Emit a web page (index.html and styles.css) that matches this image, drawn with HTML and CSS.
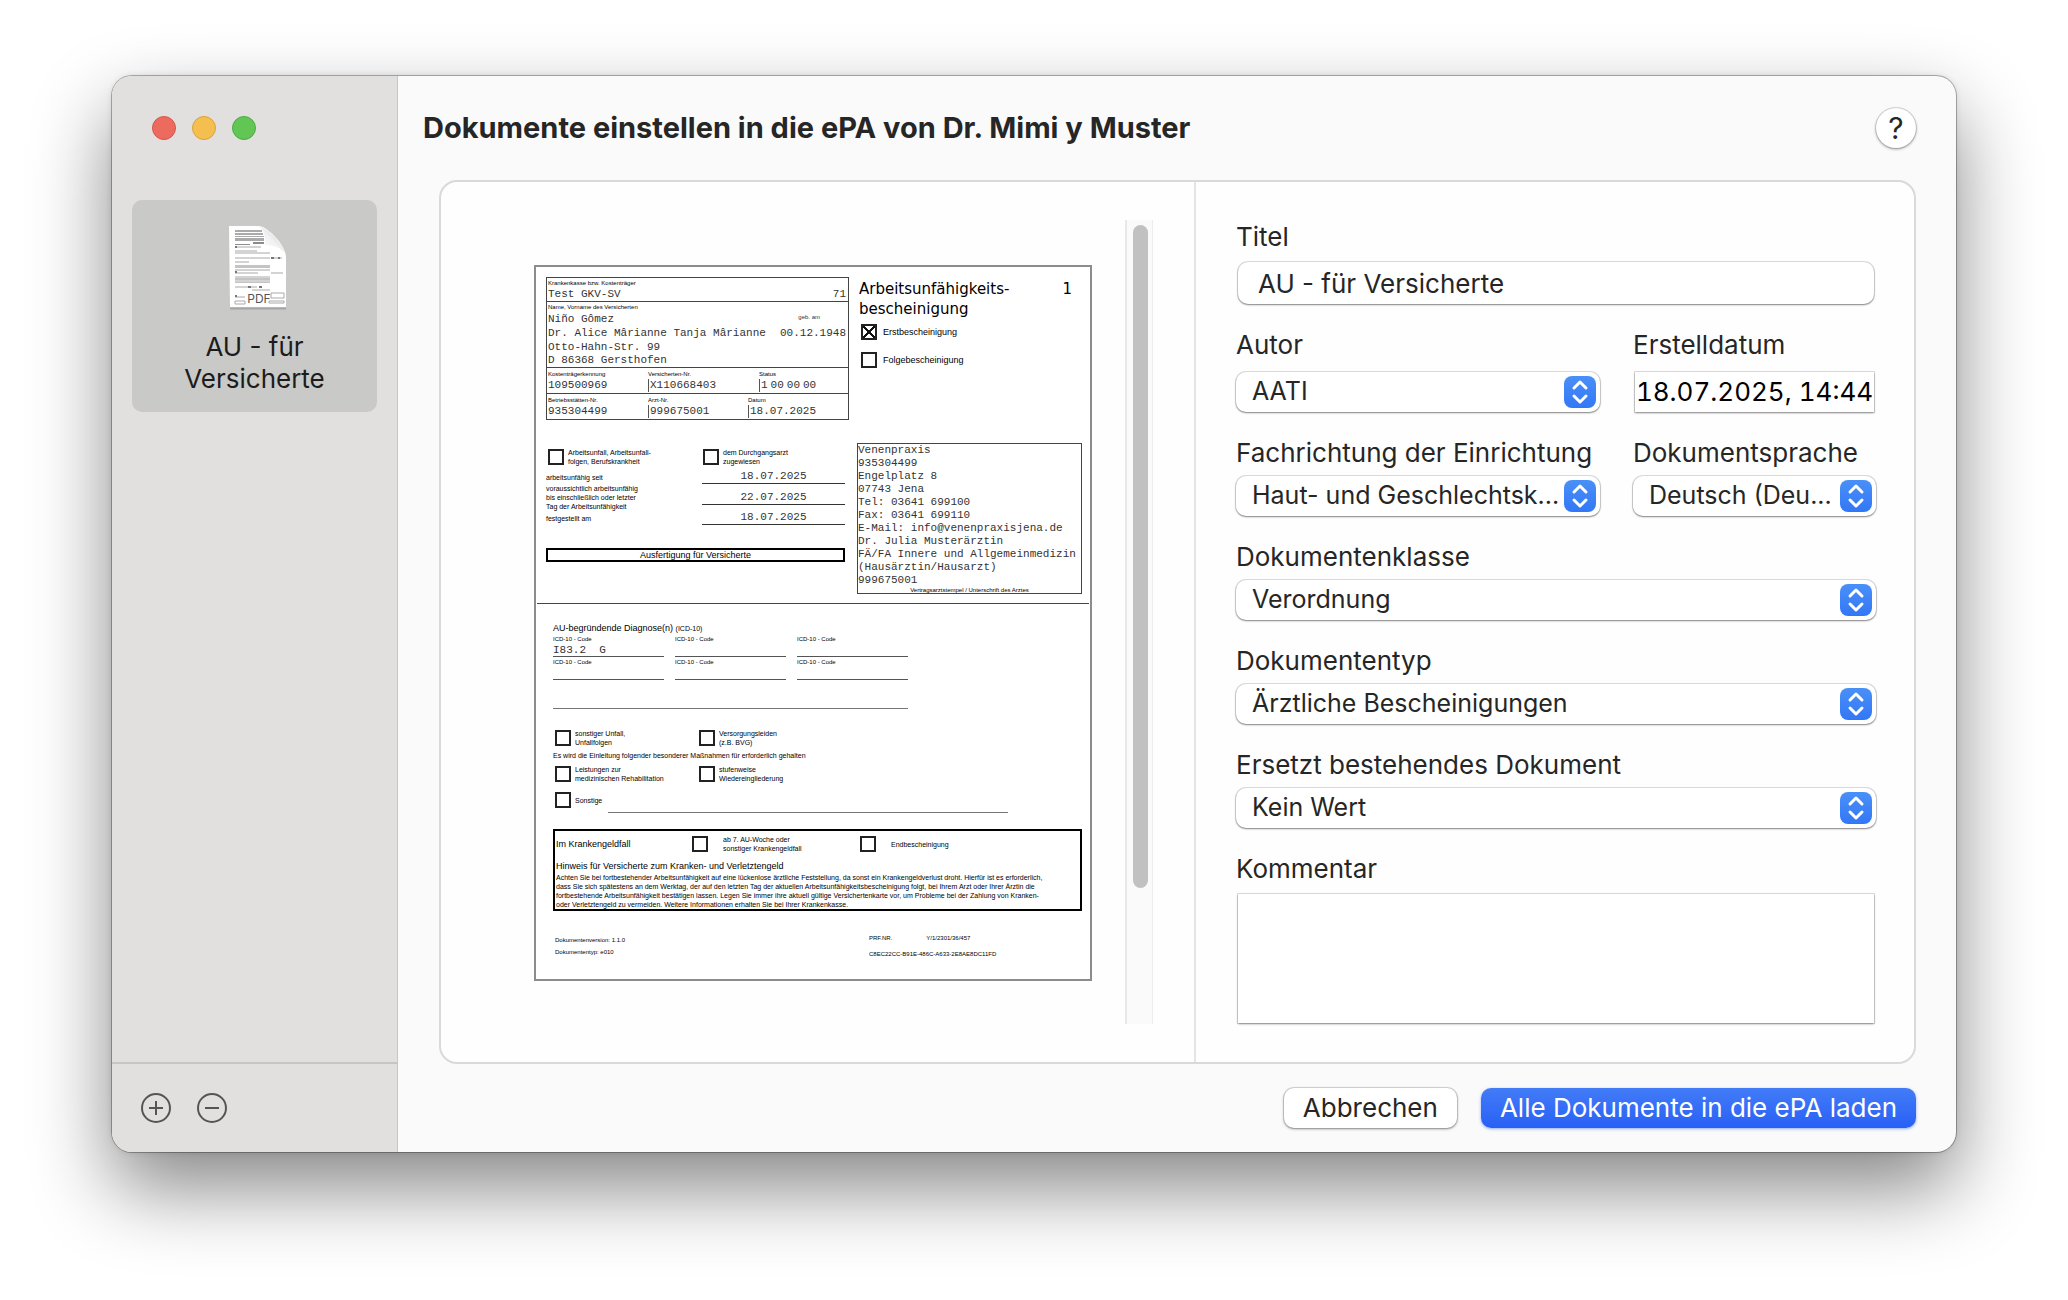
FILE: index.html
```html
<!DOCTYPE html>
<html lang="de">
  <head>
    <meta charset="UTF-8" />
    <meta name="viewport" content="width=device-width, initial-scale=1.0" />
    <title>Dokumente einstellen</title>
    <link rel="stylesheet" href="styles.css">
  </head>
  <body>
    <div class="window">
      <aside class="sidebar">
        <div class="lights">
          <button class="light red" aria-label="Schließen"></button>
          <button class="light yellow" aria-label="Minimieren"></button>
          <button class="light green" aria-label="Zoomen"></button>
        </div>

        <ul class="files">
          <li class="file">
            <svg class="file-icon" width="66" height="86" viewBox="-6 0 66 86">
              <defs>
                <linearGradient id="fold" x1="0" y1="1" x2="1" y2="0">
                  <stop offset="0" stop-color="#fff" />
                  <stop offset="0.5" stop-color="#f2f2f2" />
                  <stop offset="1" stop-color="#b8b8b8" />
                </linearGradient>
              </defs>
              <path d="M2 83.500h56" stroke="#a5a5a5" stroke-width="2" />
              <path d="M1 1h30c7 0 27 18 27 32v49H2z" fill="#fff" />
              <path d="M7 5h27v2H7zM7 8h28v2H7zM7 11h29v1H7zM7 13h29v3H7z" fill="#aaa" />
              <path d="M25 17h11v2H25zM7 19h15v1H7z" fill="#8c8c8c" />
              <path d="M7 22h26M7 26h22M7 28h35M7 33h35M7 37h14M7 41h35M7 45h35M7 52h35M7 56h35M24 65h18M7 48h23M44 33h10M43 48h12M7 62h22M7 72h10" stroke="#a8a8a8" stroke-width="1" fill="none" />
              <path d="M7 40h35v3H7zM7 53h35v2H7zM7 57h35v1H7z" fill="#c4c4c4" />
              <path d="M7 76h10v3H7zM43 68h13v5H43zM41 76h15v2H41z" fill="none" stroke="#aaa" />
              <path d="M7 22h2M7 47h2M43 33h3M50 33h2M20 62h3M31 62h3M7 71h2" stroke="#777" stroke-width="2" />
              <path d="M30 1c6 3 7 10 7 19 10 0 18 4 21 10C56 20 40 3 30 1z" fill="url(#fold)" />
              <text x="31" y="78" text-anchor="middle" class="file-badge">PDF</text>
            </svg>
            <span>AU - für<br>Versicherte</span>
          </li>
        </ul>

        <div class="sidebar-tools">
          <button class="tool" aria-label="Hinzufügen">
            <svg width="30" height="30" viewBox="0 0 30 30">
              <circle cx="15" cy="15" r="14" />
              <path d="M15 8v14M8 15h14" />
            </svg>
          </button>
          <button class="tool" aria-label="Entfernen">
            <svg width="30" height="30" viewBox="0 0 30 30">
              <circle cx="15" cy="15" r="14" />
              <path d="M8 15h14" />
            </svg>
          </button>
        </div>
      </aside>

      <main class="main">
        <header class="header">
          <h1>Dokumente einstellen in die ePA von Dr. Mimi y Muster</h1>
          <button class="help">?</button>
        </header>

        <div class="panel">
          <section class="preview">
            <article class="page">
              <div class="page-top">
                <div class="page-left">
                  <div class="insured">
                    <div class="insured-row first">
                      <p class="tiny">Krankenkasse bzw. Kostenträger</p>
                      <p class="mono spread"><span>Test GKV-SV</span><span>71</span></p>
                    </div>
                    <div class="insured-row names">
                      <p class="tiny">Name, Vorname des Versicherten</p>
                      <p class="mono spread"><span>Niño Gômez</span><span class="tiny born">geb. am</span></p>
                      <p class="mono spread"><span>Dr. Alice Mârianne Tanja Mârianne</span><span>00.12.1948</span></p>
                      <p class="mono">Otto-Hahn-Str. 99</p>
                      <p class="mono last">D 86368 Gersthofen</p>
                    </div>
                    <div class="insured-row cells status">
                      <div><p class="tiny">Kostenträgerkennung</p><p class="mono">109500969</p></div>
                      <div><p class="tiny">Versicherten-Nr.</p><p class="mono bar">X110668403</p></div>
                      <div><p class="tiny">Status</p><p class="mono bar digits"><span>1</span><span>00</span><span>00</span><span>00</span></p></div>
                    </div>
                    <div class="insured-row cells date">
                      <div><p class="tiny">Betriebsstätten-Nr.</p><p class="mono">935304499</p></div>
                      <div><p class="tiny">Arzt-Nr.</p><p class="mono bar">999675001</p></div>
                      <div><p class="tiny">Datum</p><p class="mono bar">18.07.2025</p></div>
                    </div>
                  </div>

                  <div class="checks accident">
                    <label class="check"><input type="checkbox"><span>Arbeitsunfall, Arbeitsunfall-<br>folgen, Berufskrankheit</span></label>
                    <label class="check"><input type="checkbox"><span>dem Durchgangsarzt<br>zugewiesen</span></label>
                  </div>

                  <dl class="periods">
                    <dt>arbeitsunfähig seit</dt>
                    <dd class="mono">18.07.2025</dd>
                    <dt>voraussichtlich arbeitsunfähig<br>bis einschließlich oder letzter<br>Tag der Arbeitsunfähigkeit</dt>
                    <dd class="mono">22.07.2025</dd>
                    <dt>festgestellt am</dt>
                    <dd class="mono">18.07.2025</dd>
                  </dl>

                  <p class="copy-for">Ausfertigung für Versicherte</p>
                </div>

                <div class="page-right">
                  <div class="page-title">
                    <h2>Arbeitsunfähigkeits-<br>bescheinigung</h2>
                    <span>1</span>
                  </div>
                  <label class="check kind"><input type="checkbox" checked><span>Erstbescheinigung</span></label>
                  <label class="check kind"><input type="checkbox"><span>Folgebescheinigung</span></label>
                  <div class="stamp">
                    <p class="mono">Venenpraxis<br>935304499<br>Engelplatz 8<br>07743 Jena<br>Tel: 03641 699100<br>Fax: 03641 699110<br>E-Mail: info@venenpraxisjena.de<br>Dr. Julia Musterärztin<br>FÄ/FA Innere und Allgemeinmedizin<br>(Hausärztin/Hausarzt)<br>999675001</p>
                    <p class="tiny">Vertragsarztstempel / Unterschrift des Arztes</p>
                  </div>
                </div>
              </div>

              <div class="page-bottom">
                <h3>AU-begründende Diagnose(n) <small>(ICD-10)</small></h3>
                <div class="codes">
                  <div><p class="tiny">ICD-10 - Code</p><p class="mono">I83.2&nbsp; G</p></div>
                  <div><p class="tiny">ICD-10 - Code</p><p class="mono"></p></div>
                  <div><p class="tiny">ICD-10 - Code</p><p class="mono"></p></div>
                  <div><p class="tiny">ICD-10 - Code</p><p class="mono"></p></div>
                  <div><p class="tiny">ICD-10 - Code</p><p class="mono"></p></div>
                  <div><p class="tiny">ICD-10 - Code</p><p class="mono"></p></div>
                  <div class="free-line"></div>
                </div>

                <div class="checks reasons">
                  <label class="check"><input type="checkbox"><span>sonstiger Unfall,<br>Unfallfolgen</span></label>
                  <label class="check"><input type="checkbox"><span>Versorgungsleiden<br>(z.B. BVG)</span></label>
                </div>
                <p class="measures">Es wird die Einleitung folgender besonderer Maßnahmen für erforderlich gehalten</p>
                <div class="checks">
                  <label class="check"><input type="checkbox"><span>Leistungen zur<br>medizinischen Rehabilitation</span></label>
                  <label class="check"><input type="checkbox"><span>stufenweise<br>Wiedereingliederung</span></label>
                </div>
                <div class="checks other">
                  <label class="check"><input type="checkbox"><span>Sonstige</span></label>
                </div>
                <div class="other-line"></div>

                <div class="notice">
                  <div class="notice-row">
                    <h3>Im Krankengeldfall</h3>
                    <label class="check"><input type="checkbox"><span>ab 7. AU-Woche oder<br>sonstiger Krankengeldfall</span></label>
                    <label class="check"><input type="checkbox"><span>Endbescheinigung</span></label>
                  </div>
                  <h3>Hinweis für Versicherte zum Kranken- und Verletztengeld</h3>
                  <p>Achten Sie bei fortbestehender Arbeitsunfähigkeit auf eine lückenlose ärztliche Feststellung, da sonst ein Krankengeldverlust droht. Hierfür ist es erforderlich,<br>dass Sie sich spätestens an dem Werktag, der auf den letzten Tag der aktuellen Arbeitsunfähigkeitsbescheinigung folgt, bei Ihrem Arzt oder Ihrer Ärztin die<br>fortbestehende Arbeitsunfähigkeit bestätigen lassen. Legen Sie immer ihre aktuell gültige Versichertenkarte vor, um Probleme bei der Zahlung von Kranken-<br>oder Verletztengeld zu vermeiden. Weitere Informationen erhalten Sie bei Ihrer Krankenkasse.</p>
                </div>

                <footer class="page-footer">
                  <div class="version">
                    <p>Dokumentenversion: 1.1.0</p>
                    <p>Dokumententyp: e010</p>
                  </div>
                  <div class="number">
                    <p><span>PRF.NR.</span><span>Y/1/2301/36/457</span></p>
                    <p>C8EC22CC-B91E-486C-A633-2E8AE8DC11FD</p>
                  </div>
                </footer>
              </div>
            </article>
            <div class="scrollbar"><div class="thumb"></div></div>
          </section>

          <form class="details">
            <div class="field title-field">
              <label for="titel">Titel</label>
              <input id="titel" class="text" type="text" value="AU - für Versicherte">
            </div>

            <div class="columns author-row">
              <div class="field">
                <label for="autor">Autor</label>
                <div class="select">
                  <select id="autor"><option>AATI</option></select>
                  <svg viewBox="0 0 32 32"><path d="M10 12l6-6 6 6M10 20l6 6 6-6" /></svg>
                </div>
              </div>
              <div class="field">
                <label for="datum">Erstelldatum</label>
                <input id="datum" class="datetime" type="text" value="18.07.2025, 14:44">
              </div>
            </div>

            <div class="columns">
              <div class="field">
                <label for="fachrichtung">Fachrichtung der Einrichtung</label>
                <div class="select">
                  <select id="fachrichtung"><option>Haut- und Geschlechtsk...</option></select>
                  <svg viewBox="0 0 32 32"><path d="M10 12l6-6 6 6M10 20l6 6 6-6" /></svg>
                </div>
              </div>
              <div class="field">
                <label for="sprache">Dokumentsprache</label>
                <div class="select">
                  <select id="sprache"><option>Deutsch (Deu...</option></select>
                  <svg viewBox="0 0 32 32"><path d="M10 12l6-6 6 6M10 20l6 6 6-6" /></svg>
                </div>
              </div>
            </div>

            <div class="field">
              <label for="klasse">Dokumentenklasse</label>
              <div class="select">
                <select id="klasse"><option>Verordnung</option></select>
                <svg viewBox="0 0 32 32"><path d="M10 12l6-6 6 6M10 20l6 6 6-6" /></svg>
              </div>
            </div>

            <div class="field">
              <label for="typ">Dokumententyp</label>
              <div class="select">
                <select id="typ"><option>Ärztliche Bescheinigungen</option></select>
                <svg viewBox="0 0 32 32"><path d="M10 12l6-6 6 6M10 20l6 6 6-6" /></svg>
              </div>
            </div>

            <div class="field">
              <label for="ersetzt">Ersetzt bestehendes Dokument</label>
              <div class="select">
                <select id="ersetzt"><option>Kein Wert</option></select>
                <svg viewBox="0 0 32 32"><path d="M10 12l6-6 6 6M10 20l6 6 6-6" /></svg>
              </div>
            </div>

            <div class="field comment">
              <label for="kommentar">Kommentar</label>
              <textarea id="kommentar"></textarea>
            </div>
          </form>
        </div>

        <footer class="actions">
          <button class="button">Abbrechen</button>
          <button class="button primary">Alle Dokumente in die ePA laden</button>
        </footer>
      </main>
    </div>
  </body>
</html>
```

FILE: styles.css
```css
* {
  box-sizing: border-box;
}
body {
  display: flex;
  min-height: 100vh;
  margin: 0;
  padding: 76px 112px 148px;
  background: #fff;
  color: #262626;
  font-family: Inter, "Liberation Sans", sans-serif;
  font-size: 26px;
  line-height: 32px;
}
h1, h2, h3, p, ul, dl, dd {
  margin: 0;
  padding: 0;
}
button, input, select, textarea {
  font: inherit;
  color: inherit;
}
button {
  padding: 0;
  border: none;
}

.window {
  display: flex;
  flex: 1;
  border-radius: 20px;
  overflow: hidden;
  background: #fafafa;
  box-shadow: 0 0 0 1px rgba(0, 0, 0, 0.28), 0 0 6px rgba(0, 0, 0, 0.12),
    0 36px 80px rgba(0, 0, 0, 0.48);
}

/* sidebar */
.sidebar {
  display: flex;
  flex-direction: column;
  width: 286px;
  background: #e1e0de;
  border-right: 1px solid #c8c7c5;
}
.lights {
  display: flex;
  gap: 16px;
  padding: 40px 40px 60px;
}
.light {
  width: 24px;
  height: 24px;
  border-radius: 50%;
}
.red {
  background: #ec6a5e;
  border: 1px solid #d6554a;
}
.yellow {
  background: #f4bf4f;
  border: 1px solid #d9a23c;
}
.green {
  background: #61c654;
  border: 1px solid #4fab42;
}
.files {
  flex: 1;
  padding: 0 20px;
  list-style: none;
}
.file {
  display: flex;
  flex-direction: column;
  align-items: center;
  gap: 20px;
  padding: 25px 0 17px;
  border-radius: 10px;
  background: #c9c9c7;
  color: #1c1c1c;
  text-align: center;
}
.file-badge {
  fill: #555;
  font-size: 12px;
}
.sidebar-tools {
  display: flex;
  gap: 26px;
  height: 90px;
  padding: 29px;
  border-top: 2px solid #c6c5c3;
}
.tool {
  height: 30px;
  background: none;
}
.tool svg {
  display: block;
  fill: none;
  stroke: #555;
  stroke-width: 2;
}

/* main column */
.main {
  display: flex;
  flex: 1;
  flex-direction: column;
  min-width: 0;
  padding: 0 40px 0 41px;
}
.header {
  display: flex;
  align-items: center;
  justify-content: space-between;
  height: 104px;
  margin-left: -16px;
}
h1 {
  font-size: 29px;
  font-weight: 700;
}
.help {
  width: 40px;
  height: 40px;
  border-radius: 50%;
  background: #fff;
  box-shadow: 0 0 0 1px rgba(0, 0, 0, 0.12), 0 1px 3px rgba(0, 0, 0, 0.4);
  font-size: 30px;
}
.panel {
  display: grid;
  flex: 1;
  grid-template-columns: minmax(0, 1fr) 720px;
  border: 2px solid #d9d9d9;
  border-radius: 18px;
  background: #fefefe;
}
.actions {
  display: flex;
  justify-content: flex-end;
  gap: 24px;
  padding: 24px 0;
}
.button {
  height: 40px;
  padding: 0 19px;
  border-radius: 10px;
  background: #fff;
  box-shadow: 0 0 0 1px rgba(0, 0, 0, 0.13), 0 1px 3px rgba(0, 0, 0, 0.4);
}
.primary {
  background: linear-gradient(#427cf7, #2860f5);
  color: #fff;
  box-shadow: 0 1px 3px rgba(40, 96, 245, 0.5);
}

/* form */
.details {
  display: flex;
  flex-direction: column;
  gap: 25px;
  padding: 39px 38px 39px 40px;
  border-left: 2px solid #e4e4e4;
}
.field {
  display: flex;
  flex-direction: column;
  gap: 7px;
  min-width: 0;
}
.title-field,
.comment {
  gap: 9px;
}
.columns {
  display: grid;
  grid-template-columns: minmax(0, 1fr) 243px;
  gap: 33px;
}
.author-row .field {
  gap: 11px;
}
.text,
.datetime,
.details select,
textarea {
  height: 40px;
  border: none;
  outline: none;
  background: #fff;
  box-shadow: 0 0 0 1px rgba(0, 0, 0, 0.13), 0 1px 2px rgba(0, 0, 0, 0.4);
}
.text,
.datetime,
textarea {
  margin: 0 2px;
}
.text {
  height: 42px;
  padding: 0 20px;
  border-radius: 10px;
}
.datetime {
  padding: 0 0 2px;
  color: #000;
  font-variant-numeric: tabular-nums;
  text-align: center;
}
.select {
  position: relative;
}
.details select {
  display: block;
  width: 100%;
  padding: 0 36px 2px 16px;
  border-radius: 10px;
  font-size: 25px;
  appearance: none;
}
.select svg {
  position: absolute;
  top: 4px;
  right: 4px;
  width: 32px;
  height: 32px;
  border-radius: 8px;
  background: linear-gradient(#4a90f8, #3277f6);
  fill: none;
  stroke: #fff;
  stroke-width: 3;
  stroke-linecap: round;
  stroke-linejoin: round;
  pointer-events: none;
}
.comment,
textarea {
  flex: 1;
}
textarea {
  display: block;
  padding: 8px;
  resize: none;
}

/* document preview */
.preview {
  display: flex;
  padding: 38px 41px 38px 38px;
}
.scrollbar {
  width: 28px;
  padding: 5px 4px 0 6px;
  border-left: 2px solid #e8e8e8;
  border-right: 1px solid #ededed;
  background: #fafafa;
}
.thumb {
  height: 83%;
  border-radius: 8px;
  background: #c1c1c1;
}
.page {
  flex: 1;
  align-self: flex-start;
  margin: 45px 33px 0 55px;
  border: 2px solid #8c8c8c;
  background: #fff;
  color: #000;
  font-family: "Liberation Sans", Arial, sans-serif;
  font-size: 7px;
  line-height: 9px;
}
.page h3 {
  font-size: 9px;
  font-weight: 400;
  line-height: 11px;
}
.tiny {
  font-family: "Liberation Sans", Arial, sans-serif;
  font-size: 6px;
  line-height: 10px;
}
.mono {
  color: #333;
  font-family: "Liberation Mono", "Courier New", monospace;
  font-size: 11px;
  line-height: 13px;
  white-space: nowrap;
}
.spread {
  display: flex;
  justify-content: space-between;
}
.page-top {
  display: grid;
  grid-template-columns: 303px minmax(0, 1fr);
  gap: 8px;
  padding: 10px 8px 9px 10px;
}

.insured {
  border: 1px solid #444;
}
.insured-row {
  padding: 0 2px 0 1px;
}
.first,
.names,
.status {
  border-bottom: 1px solid #444;
}
.names .mono {
  line-height: 14px;
}
.names .last {
  line-height: 13px;
}
.born {
  padding-right: 26px;
}
.cells {
  display: grid;
  padding: 1px 0 1px 1px;
}
.status {
  grid-template-columns: 100px 111px 1fr;
}
.date {
  grid-template-columns: 100px 100px 1fr;
}
.bar {
  padding-left: 1px;
  border-left: 1px solid #555;
}
.digits {
  display: flex;
  gap: 3px;
}

.checks {
  display: grid;
  grid-template-columns: 144px 1fr;
  padding-left: 2px;
}
.check {
  display: flex;
  align-items: center;
  gap: 4px;
  height: 16px;
}
.check input {
  flex: none;
  width: 16px;
  height: 16px;
  margin: 0;
  border: 2px solid #222;
  background: #fff;
  appearance: none;
}
.check input:checked {
  background: linear-gradient(45deg, transparent 45%, #111 45%, #111 55%, transparent 55%),
    linear-gradient(-45deg, transparent 45%, #111 45%, #111 55%, transparent 55%);
}
.accident {
  grid-template-columns: 155px 1fr;
  margin-top: 29px;
}
.periods {
  display: grid;
  grid-template-columns: 156px 143px;
  align-items: center;
  margin-top: 5px;
}
.periods dd {
  border-bottom: 1px solid #333;
  text-align: center;
}
.copy-for {
  margin: 23px 4px 0 0;
  border: 2px solid #000;
  font-size: 9px;
  line-height: 10px;
  text-align: center;
}

.page-title {
  display: flex;
  justify-content: space-between;
  padding: 2px 10px 5px 2px;
  font-family: "DejaVu Sans", Verdana, sans-serif;
  font-size: 15px;
  line-height: 20px;
}
h2 {
  font-size: 15px;
  font-weight: 400;
}
.kind {
  gap: 6px;
  margin: 0 0 12px 4px;
  font-size: 9px;
}
.stamp {
  margin-top: 75px;
  border: 1px solid #444;
}
.stamp .tiny {
  line-height: 6px;
  text-align: center;
}

.page-bottom {
  margin: 0 1px;
  padding: 19px 7px 17px 16px;
  border-top: 1px solid #444;
}
small {
  font-size: 7px;
}
.codes {
  display: grid;
  grid-template-columns: repeat(3, 111px);
  column-gap: 11px;
}
.codes .mono {
  height: 13px;
  border-bottom: 1px solid #555;
  line-height: 12px;
}
.free-line {
  grid-column: span 3;
  height: 29px;
  border-bottom: 1px solid #777;
}
.reasons {
  margin-top: 21px;
}
.measures {
  margin: 5px 0;
  line-height: 10px;
}
.other {
  margin-top: 10px;
}
.other-line {
  width: 400px;
  margin: 4px 0 16px 55px;
  border-bottom: 1px solid #777;
}
.notice {
  padding: 5px 1px 0;
  border: 2px solid #000;
}
.notice-row {
  display: grid;
  grid-template-columns: 136px 168px 1fr;
  align-items: center;
  margin-bottom: 9px;
}
.notice-row .check {
  gap: 15px;
}
.notice p {
  margin-top: 1px;
}
.page-footer {
  display: grid;
  grid-template-columns: 314px 1fr;
  align-items: center;
  margin-top: 19px;
  padding-left: 2px;
  font-size: 6px;
}
.version {
  line-height: 12px;
}
.number {
  line-height: 16px;
}
.number p {
  display: flex;
  gap: 34px;
}
```
